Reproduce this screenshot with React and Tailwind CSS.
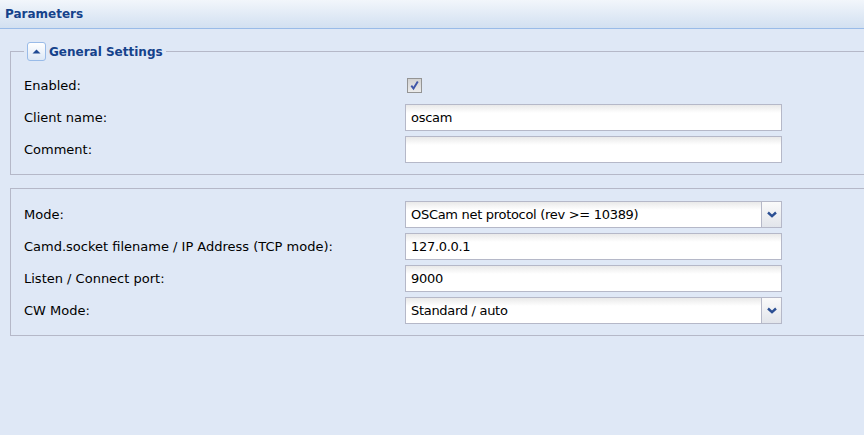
import React from "react";

const Field = ({ value }) => (
  <div className="w-[377px] h-[27px] border border-[#b5b8c8] bg-[linear-gradient(to_bottom,#e9e9e9,#ffffff_8px)] px-[5px] flex items-center text-[13px] tracking-[-0.3px] text-black">
    {value}
  </div>
);

const Combo = ({ value }) => (
  <div className="w-[377px] h-[27px] flex">
    <div className="flex-1 border border-[#b5b8c8] border-r-0 bg-[linear-gradient(to_bottom,#e9e9e9,#ffffff_8px)] px-[5px] flex items-center text-[13px] tracking-[-0.3px] text-black">
      {value}
    </div>
    <div className="w-[21px] border border-[#b5b8c8] bg-[linear-gradient(to_bottom,#fafafa,#e2e5eb)] flex items-center justify-center">
      <svg width="10" height="7" viewBox="0 0 10 7">
        <path d="M1 1.5 L5 5.2 L9 1.5" fill="none" stroke="#2b4f93" strokeWidth="2.4" />
      </svg>
    </div>
  </div>
);

const Row = ({ label, children }) => (
  <div className="flex items-center h-[27px]">
    <div className="w-[381px] text-[13px] text-black">{label}</div>
    {children}
  </div>
);

const App = () => {
  return (
    <div className="w-[864px] h-[435px] bg-[#dfe8f6] overflow-hidden font-['DejaVu_Sans',sans-serif]">
      {/* panel header */}
      <div className="h-[29px] border-b border-[#99bbe8] bg-[linear-gradient(to_bottom,#f2f6fb,#d2e0f1)] pl-[5px] leading-[28px] text-[12px] font-bold text-[#15428b]">
        Parameters
      </div>

      <div className="pl-[10px] pt-[13px]">
        <fieldset className="border border-r-0 border-[#b5b8c8] px-[13px] pt-[11px] pb-[11px]">
          <legend className="px-[3px]">
            <div className="flex items-center gap-[3px]">
              <div className="w-[19px] h-[19px] rounded-[3px] border border-[#99bbe8] bg-[linear-gradient(to_bottom,#ffffff,#dde8f6)] flex items-center justify-center">
                <svg width="9" height="5" viewBox="0 0 9 5">
                  <path d="M0.5 4.5 L4.5 0.5 L8.5 4.5 Z" fill="#1f4a94" />
                </svg>
              </div>
              <span className="text-[12px] font-bold text-[#15428b]">General Settings</span>
            </div>
          </legend>
          <div className="flex flex-col gap-[5px]">
            <Row label="Enabled:">
              <div className="ml-[2px] w-[15px] h-[15px] border border-[#949494] bg-[linear-gradient(to_bottom,#d2d2d2,#ebebeb)] flex items-center justify-center">
                <svg width="11" height="11" viewBox="0 0 11 11">
                  <path d="M2.3 5.6 L4.5 8.6 L8.8 1.4" fill="none" stroke="#3f56a8" strokeWidth="1.9" />
                </svg>
              </div>
            </Row>
            <Row label="Client name:">
              <Field value="oscam" />
            </Row>
            <Row label="Comment:">
              <Field value="" />
            </Row>
          </div>
        </fieldset>

        <fieldset className="mt-[13px] border border-r-0 border-[#b5b8c8] px-[13px] pt-[12px] pb-[11px]">
          <div className="flex flex-col gap-[5px]">
            <Row label="Mode:">
              <Combo value="OSCam net protocol (rev >= 10389)" />
            </Row>
            <Row label="Camd.socket filename / IP Address (TCP mode):">
              <Field value="127.0.0.1" />
            </Row>
            <Row label="Listen / Connect port:">
              <Field value="9000" />
            </Row>
            <Row label="CW Mode:">
              <Combo value="Standard / auto" />
            </Row>
          </div>
        </fieldset>
      </div>
    </div>
  );
};

export default App;
